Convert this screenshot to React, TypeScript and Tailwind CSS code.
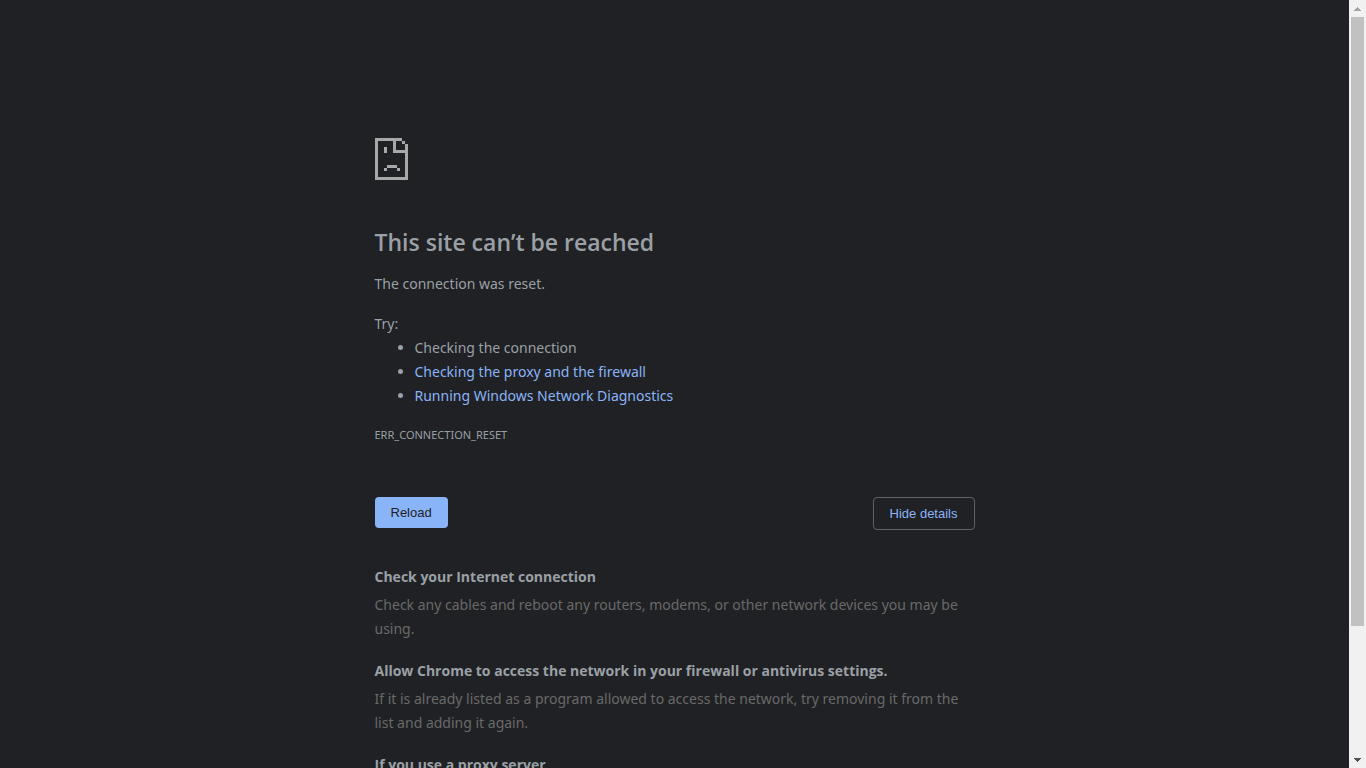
import { useState } from "react";
import type { ReactNode } from "react";

function SadPageIcon() {
  return (
    <svg
      className="block h-[42px] w-[33px] fill-[#a8a8a8]"
      viewBox="0 0 33 42"
      shapeRendering="crispEdges"
      aria-hidden="true"
    >
      <path d="M0 0h27v3H3v36h27V15H18V3h3v9h9V6h3v36H0z" />
      <path d="M27 3h3v3h-3zM9 9h3v6H9zM12 27h10v3H12zM9 30h3v3H9zM22 30h3v3h-3z" />
    </svg>
  );
}

function SuggestionTitle({ children }: { children: ReactNode }) {
  return <h2 className="mb-1 font-['Segoe_UI','Open_Sans',sans-serif] font-bold">{children}</h2>;
}

function Suggestion({ title, children }: { title: string; children: ReactNode }) {
  return (
    <section className="mb-[18px]">
      <SuggestionTitle>{title}</SuggestionTitle>
      <p className="text-[#696969]">{children}</p>
    </section>
  );
}

function ScrollTrack() {
  return (
    <div className="flex w-[17px] shrink-0 flex-col items-center bg-[#f1f1f1]">
      <button aria-label="Scroll up" className="flex h-[17px] w-full shrink-0 items-center justify-center">
        <svg className="h-[4px] w-[7px] fill-[#a3a3a3]" viewBox="0 0 7 4" shapeRendering="crispEdges">
          <path d="M3 0h1v1h1v1h1v1h1v1H0V3h1V2h1V1h1z" />
        </svg>
      </button>
      <div className="flex w-full grow flex-col px-[2px]">
        <div className="grow-[609] bg-[#c1c1c1]" />
        <div className="grow-[125]" />
      </div>
      <button aria-label="Scroll down" className="flex h-[17px] w-full shrink-0 items-center justify-center">
        <svg className="h-[4px] w-[7px] fill-[#505050]" viewBox="0 0 7 4" shapeRendering="crispEdges">
          <path d="M0 0h7v1H6v1H5v1H4v1H3V3H2V2H1V1H0z" />
        </svg>
      </button>
    </div>
  );
}

export default function App() {
  const [open, setOpen] = useState(true);
  return (
    <div className="flex h-screen bg-[#202124] font-['Segoe_UI','Noto_Sans',sans-serif] text-[14px] leading-6 text-[#9aa0a6]">
      <div className="min-w-0 grow overflow-hidden">
        <main className="mx-auto max-w-[600px] pt-[138px]">
          <SadPageIcon />
          <h1 className="mt-12 mb-4 font-['Segoe_UI','Open_Sans',sans-serif] text-[23px] leading-7 font-semibold">
            This site can’t be reached
          </h1>
          <p>The connection was reset.</p>
          <p className="mt-4">Try:</p>
          <ul className="list-disc pl-10">
            <li>Checking the connection</li>
            <li>
              <a href="#proxy" className="text-[#8ab4f8]">Checking the proxy and the firewall</a>
            </li>
            <li>
              <a href="#diagnostics" className="text-[#8ab4f8]">Running Windows Network Diagnostics</a>
            </li>
          </ul>
          <p className="mt-[15px] text-[11px]">ERR_CONNECTION_RESET</p>
          <div className="mt-[50px] flex items-start justify-between font-['Liberation_Sans',Arial,sans-serif] text-[13px] leading-[15px]">
            <button className="rounded bg-[#8ab4f8] px-4 py-2 text-[#202124]">Reload</button>
            <button
              className="rounded border border-[#5f6368] px-4 py-2 text-[#8ab4f8]"
              aria-expanded={open}
              onClick={() => setOpen(!open)}
            >
              {open ? "Hide details" : "Details"}
            </button>
          </div>
          {open && (
            <div className="mt-[35px]">
              <Suggestion title="Check your Internet connection">
                Check any cables and reboot any routers, modems, or other network devices you may be using.
              </Suggestion>
              <Suggestion title="Allow Chrome to access the network in your firewall or antivirus settings.">
                If it is already listed as a program allowed to access the network, try removing it from the list and
                adding it again.
              </Suggestion>
              <section id="proxy">
                <SuggestionTitle>If you use a proxy server</SuggestionTitle>
              </section>
            </div>
          )}
        </main>
      </div>
      <ScrollTrack />
    </div>
  );
}
